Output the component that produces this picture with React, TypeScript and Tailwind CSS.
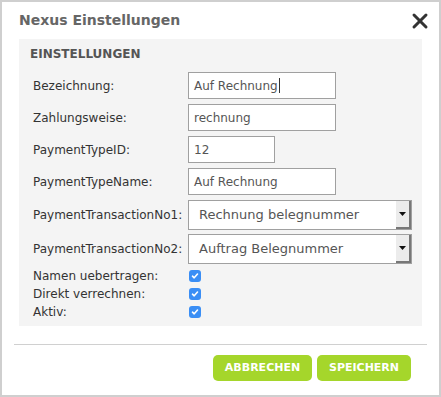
import { X } from "lucide-react";

const fields = [
  { label: "Bezeichnung:", value: "Auf Rechnung", width: "w-[148px]", caret: true },
  { label: "Zahlungsweise:", value: "rechnung", width: "w-[148px]" },
  { label: "PaymentTypeID:", value: "12", width: "w-[87px]" },
  { label: "PaymentTypeName:", value: "Auf Rechnung", width: "w-[148px]" },
];

const selects = [
  { label: "PaymentTransactionNo1:", value: "Rechnung belegnummer" },
  { label: "PaymentTransactionNo2:", value: "Auftrag Belegnummer" },
];

const checks = ["Namen uebertragen:", "Direkt verrechnen:", "Aktiv:"];

function Checkbox() {
  return (
    <div className="w-[12px] h-[12px] rounded-[3px] bg-[#3a8ef5] flex items-center justify-center">
      <svg width="8" height="8" viewBox="0 0 8 8">
        <path d="M1.5 4.2 L3.2 5.8 L6.5 2" fill="none" stroke="white" strokeWidth="1.6" strokeLinecap="round" strokeLinejoin="round" />
      </svg>
    </div>
  );
}

export default function App() {
  return (
    <div className="w-[441px] h-[397px] border-2 border-[#cfcfcf] bg-white font-['DejaVu_Sans',Verdana,sans-serif] flex flex-col">
      <div className="flex items-center justify-between pl-[17px] pr-[7px] h-[37px]">
        <h1 className="text-[14px] font-bold text-[#666]">Nexus Einstellungen</h1>
        <X className="w-[24px] h-[24px] text-[#333]" strokeWidth={3} />
      </div>

      <div className="mx-[17px] bg-[#f4f4f4] pt-[5px] pb-[5px] pl-[14px]">
        <div className="h-[20px] flex items-center text-[12px] font-bold text-[#555] mb-[8px] -ml-[3px]">EINSTELLUNGEN</div>

        <div className="flex flex-col gap-[5px]">
          {fields.map((f) => (
            <div key={f.label} className="flex items-center h-[27px]">
              <span className="w-[155px] text-[12px] text-[#333]">{f.label}</span>
              <div className={`${f.width} h-[27px] border border-[#a0a0a0] bg-white flex items-center px-[5px] text-[12px] text-[#555]`}>
                {f.value}
                {f.caret && <span className="w-px h-[15px] bg-[#333] ml-[1px]" />}
              </div>
            </div>
          ))}
        </div>

        <div className="flex flex-col gap-[4px] mt-[5px]">
          {selects.map((s) => (
            <div key={s.label} className="flex items-center h-[30px]">
              <span className="w-[155px] text-[12px] text-[#333]">{s.label}</span>
              <div className="w-[224px] h-[30px] border border-[#a0a0a0] bg-white flex items-center">
                <span className="flex-1 pl-[10px] text-[13px] text-[#555]">{s.value}</span>
                <div className="w-[15px] h-full bg-[#ececec] border-r-2 border-b-2 border-[#777] flex items-center justify-center">
                  <svg width="7" height="4" viewBox="0 0 7 4">
                    <path d="M0 0 H7 L3.5 4 Z" fill="#111" />
                  </svg>
                </div>
              </div>
            </div>
          ))}
        </div>

        <div className="flex flex-col mt-[3px]">
          {checks.map((c) => (
            <div key={c} className="flex items-center h-[18px]">
              <span className="w-[156px] text-[12px] text-[#333]">{c}</span>
              <Checkbox />
            </div>
          ))}
        </div>
      </div>

      <div className="mx-[12px] mt-[18px] border-t border-[#d0d0d0]" />

      <div className="flex justify-end gap-[5px] pr-[28px] mt-[10px]">
        <button className="w-[99px] h-[26px] rounded-[5px] bg-[#a5d62b] text-white text-[11px] font-bold">ABBRECHEN</button>
        <button className="w-[94px] h-[26px] rounded-[5px] bg-[#a5d62b] text-white text-[11px] font-bold">SPEICHERN</button>
      </div>
    </div>
  );
}
